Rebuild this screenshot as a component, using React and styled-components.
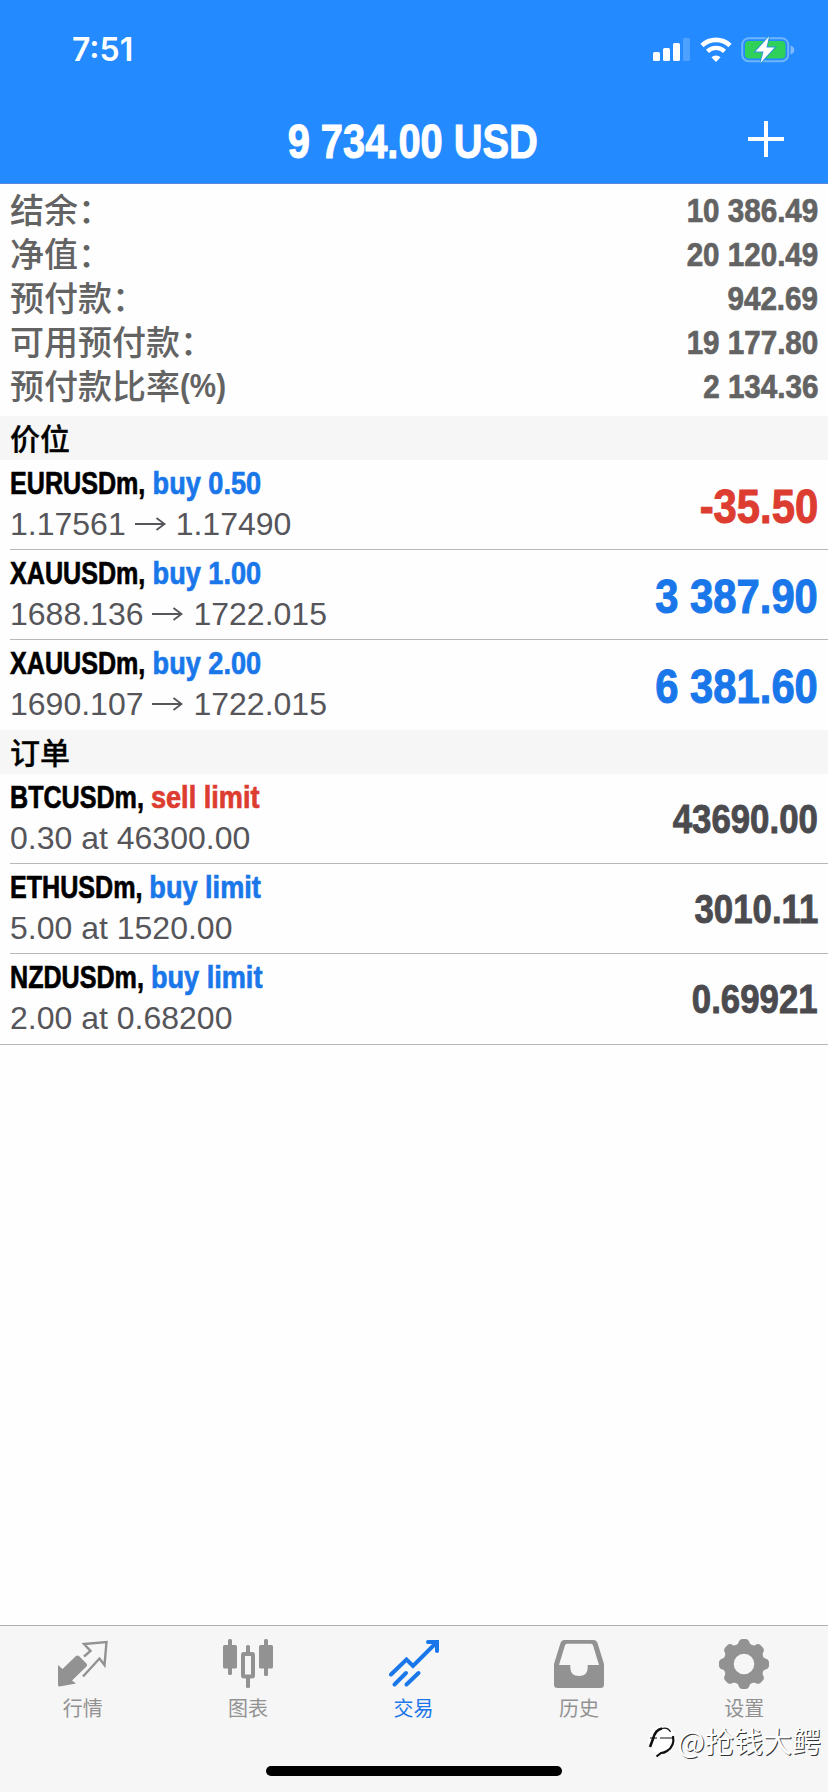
import React from "react";
import styled, { createGlobalStyle } from "styled-components";

const SANS = `"Liberation Sans", "Noto Sans CJK SC", sans-serif`;
const CJK = `"Noto Sans CJK SC", sans-serif`;

const BLUE = "#1a77ea";
const RED = "#dd3c30";

const GlobalStyle = createGlobalStyle`
  * {
    box-sizing: border-box;
  }

  body {
    margin: 0;
    background-color: #fdfdfd;
  }
`;

const Screen = styled.div`
  position: relative;
  display: flex;
  flex-direction: column;
  width: 828px;
  height: 1792px;
  overflow: hidden;
  background-color: #fefefe;
  font-family: ${SANS};
`;

// bold text squeezed to a condensed face
const Condensed = styled.div`
  font-weight: bold;
  white-space: nowrap;
  transform: scaleX(${({ $scale }) => $scale || 0.87});
  transform-origin: ${({ $origin }) => $origin || "right"};
  -webkit-text-stroke: 0.022em currentColor;
`;

const Header = styled.header`
  height: 184px;
  background-color: #248aff;
  border-bottom: 1px solid #5b87d8;
  color: white;
`;

const StatusBar = styled.div`
  display: flex;
  justify-content: space-between;
  align-items: center;
  height: 100px;
  padding: 0 33px 0 72px;
`;

const Clock = styled.div`
  font-family: Inter, sans-serif;
  font-size: 32px;
  font-weight: 600;
  line-height: 40px;
`;

const StatusIcons = styled.div`
  display: flex;
  align-items: center;

  svg + svg {
    margin-left: 9px;
  }
`;

const NavBar = styled.div`
  display: grid;
  grid-template-columns: 1fr auto 1fr;
  align-items: center;
  height: 83px;
  padding: 0 44px 0 42px;
`;

const NavTitle = styled(Condensed)`
  grid-column: 2;
  font-size: 48px;
  line-height: 60px;
`;

const AddIcon = styled.svg`
  justify-self: end;
  margin-bottom: 5px;
`;

const Summary = styled.div`
  height: 232px;
  padding: 4px 10px 8px;
`;

const SummaryRow = styled.div`
  display: flex;
  justify-content: space-between;
  height: 44px;
  line-height: 44px;
  color: #636363;
  font-size: 34px;
`;

const SummaryLabel = styled.div`
  display: flex;
  padding-top: 1px;
  font-weight: 500;
`;

const SummaryUnit = styled(Condensed)`
  line-height: 41px;
  -webkit-text-stroke: 0;
`;

const SectionTitle = styled.h2`
  height: 44px;
  margin: 0;
  padding-left: 10px;
  background-color: #f6f6f6;
  color: black;
  font-size: 30px;
  font-weight: 500;
  line-height: 47px;
  -webkit-text-stroke: 0.3px currentColor;
`;

const Row = styled.div`
  display: flex;
  justify-content: space-between;
  align-items: center;
  height: 90px;
  margin-left: 10px;
  padding-right: 10px;
  border-bottom: 1px solid ${({ $last }) => ($last ? "transparent" : "#b9b9bb")};
`;

const RowText = styled.div`
  margin-bottom: 2px;
`;

const Symbol = styled(Condensed)`
  color: black;
  font-size: 31px;
  line-height: 41px;
`;

const Side = styled.span`
  display: inline-block;
  color: ${({ $sell }) => ($sell ? RED : BLUE)};
  transform: scaleX(1.08);
  transform-origin: left;
  -webkit-text-stroke-color: currentColor;
`;

const Detail = styled.div`
  display: flex;
  align-items: center;
  color: #55555a;
  font-size: 32px;
  line-height: 41px;
  white-space: nowrap;
`;

const Arrow = styled.svg`
  margin: 0 10px 0 9px;
`;

const Profit = styled(Condensed)`
  padding-top: 3px;
  color: ${({ $loss }) => ($loss ? RED : BLUE)};
  font-size: 48px;
`;

const Price = styled(Condensed)`
  padding-top: 2px;
  color: #4b4b4f;
  font-size: 40px;
`;

const ListEnd = styled.div`
  border-top: 1px solid #b9b9bb;
`;

const TabBar = styled.nav`
  display: flex;
  height: 167px;
  margin-top: auto;
  padding: 13px 1px 0 0;
  background-color: #f6f6f6;
  border-top: 1px solid #aeb0b0;
`;

const Tab = styled.div`
  display: flex;
  flex: 1;
  flex-direction: column;
  align-items: center;
  color: ${({ $active }) => ($active ? BLUE : "#929292")};
  font-family: ${CJK};
  font-size: 20px;
  line-height: 28px;

  svg {
    margin-bottom: 5px;
  }
`;

const HomeIndicator = styled.div`
  position: absolute;
  bottom: 16px;
  left: 266px;
  width: 296px;
  height: 10px;
  border-radius: 5px;
  background-color: black;
`;

const Watermark = styled.div`
  position: absolute;
  right: 7px;
  bottom: 31px;
  display: flex;
  align-items: center;
  color: white;
  font-family: ${CJK};
  font-size: 29px;
  line-height: 42px;
  text-shadow: 1px 1px 0.5px #333;
`;

function SignalIcon() {
  return (
    <svg width="38" height="26" viewBox="0 0 38 26" fill="white">
      <rect x="0" y="15" width="7" height="9" rx="1.5" />
      <rect x="10" y="11" width="7" height="13" rx="1.5" />
      <rect x="20" y="6" width="7" height="18" rx="1.5" />
      <rect x="30" y="1" width="7" height="23" rx="1.5" opacity="0.2" />
    </svg>
  );
}

function WifiIcon() {
  return (
    <svg width="32" height="26" viewBox="0 0 32 26" fill="none" stroke="white">
      <path d="M2 8.5a20.2 20.2 0 0 1 28 0" strokeWidth="4.6" />
      <path d="M7.5 14.3a12.3 12.3 0 0 1 17 0" strokeWidth="4.4" />
      <path d="M16 25l-4.6-4.7a6.6 6.6 0 0 1 9.2 0z" fill="white" stroke="none" />
    </svg>
  );
}

function BatteryIcon() {
  return (
    <svg width="54" height="28" viewBox="0 0 54 28">
      <rect x="1.2" y="2.2" width="46" height="23" rx="6.5" fill="none" stroke="#6fb5fb" strokeWidth="2" />
      <path d="M49.5 9.5q3.8 1.2 3.8 4.5t-3.8 4.5z" fill="#7db9fb" />
      <rect x="4" y="5" width="40.5" height="17.5" rx="4" fill="#30d158" />
      <path
        d="M28 0.5L14.5 15.5h8L19.5 27 33.5 11.5h-8z"
        fill="white"
        stroke="#2a96d8"
        strokeWidth="2"
        paintOrder="stroke"
      />
    </svg>
  );
}

function QuotesIcon() {
  return (
    <svg width="50" height="50" viewBox="0 0 50 50">
      <path
        d="M0 26L4.5 30 18 17q1.500-1.200 3 0l7.500 7.500q1.200 1.500 0 3L14 41.500 18 44.500 1.500 47.500q-1.500 0-1.500-1.500z"
        fill="currentColor"
      />
      <path
        d="M26 17.500l6.500-5.500-6.500-7L48.500 3l-2 23-5-6.500-16.500 18"
        fill="none"
        stroke="currentColor"
        strokeWidth="2.4"
      />
    </svg>
  );
}

function ChartIcon() {
  return (
    <svg width="50" height="50" viewBox="0 0 50 50" fill="currentColor">
      <rect x="5" y="0" width="4" height="36" rx="1.5" />
      <rect x="0" y="6" width="14" height="23.5" rx="1.5" />
      <rect x="41" y="0" width="4" height="37" rx="1.5" />
      <rect x="36" y="6" width="14" height="23.5" rx="1.5" />
      <rect x="23" y="6" width="4" height="8" rx="1.5" />
      <rect x="23" y="37" width="4" height="12" rx="1.5" />
      <rect x="20" y="15" width="10" height="22.5" rx="1" fill="none" stroke="currentColor" strokeWidth="4" />
    </svg>
  );
}

function TradeIcon() {
  return (
    <svg
      width="50"
      height="50"
      viewBox="0 0 50 50"
      fill="none"
      stroke="currentColor"
      strokeWidth="4"
      strokeLinecap="round"
    >
      <path d="M2 35.5L17.5 20.5 24 27 47.5 3.5" />
      <path d="M39 3H48V12" />
      <path d="M5.5 45.5L17 34M17.5 45.5L29.5 34" />
    </svg>
  );
}

function HistoryIcon() {
  return (
    <svg width="50" height="50" viewBox="0 0 50 50">
      <path
        fillRule="evenodd"
        fill="currentColor"
        d="M10.5 1h29q3 0 4 3L50 25v20.5q0 3.500-3.500 3.500h-43Q0 49 0 45.500V25L6.500 4q1-3 4-3zM13 4.800q-1.500 0-2 1.500L5 26h11.300v2.500q0 8.500 8.700 8.500t8.700-8.500V26H45L39 6.300q-.5-1.500-2-1.500z"
      />
    </svg>
  );
}

function SettingsIcon() {
  return (
    <svg width="50" height="50" viewBox="0 0 50 50">
      <g fill="currentColor">
        {[0, 45, 90, 135, 180, 225, 270, 315].map((angle) => (
          <path
            key={angle}
            d="M15 8q3.500-1 4.500-4.500Q20.500 0 23.500 0h3q3 0 4 3.500Q31.500 7 35 8z"
            transform={`rotate(${angle} 25 25)`}
          />
        ))}
      </g>
      <circle cx="25" cy="25" r="15.5" fill="none" stroke="currentColor" strokeWidth="10.4" />
    </svg>
  );
}

function WatermarkLogo() {
  return (
    <svg width="31" height="36" viewBox="0 0 31 36" fill="none" stroke="#111" strokeWidth="1.8">
      <circle cx="15" cy="18" r="14" fill="white" stroke="none" />
      <path d="M3 25L6 17Q8 8 15 6.500" strokeWidth="2.600" />
      <path d="M15 6.500Q21 5 23.500 10" strokeWidth="1.200" />
      <path d="M26 14Q28 24 20 29Q17 31 14 31L9.500 34.500" strokeWidth="2.200" />
      <path d="M3 16H10M13 16H26" strokeWidth="1.200" />
    </svg>
  );
}

const summary = [
  { label: "结余：", value: "10 386.49" },
  { label: "净值：", value: "20 120.49" },
  { label: "预付款：", value: "942.69" },
  { label: "可用预付款：", value: "19 177.80" },
  { label: "预付款比率", unit: "(%)", value: "2 134.36" },
];

const positions = [
  { symbol: "EURUSDm", side: "buy 0.50", open: "1.17561", current: "1.17490", profit: "-35.50" },
  { symbol: "XAUUSDm", side: "buy 1.00", open: "1688.136", current: "1722.015", profit: "3 387.90" },
  { symbol: "XAUUSDm", side: "buy 2.00", open: "1690.107", current: "1722.015", profit: "6 381.60" },
];

const orders = [
  { symbol: "BTCUSDm", side: "sell limit", detail: "0.30 at 46300.00", price: "43690.00" },
  { symbol: "ETHUSDm", side: "buy limit", detail: "5.00 at 1520.00", price: "3010.11" },
  { symbol: "NZDUSDm", side: "buy limit", detail: "2.00 at 0.68200", price: "0.69921" },
];

const tabs = [
  { label: "行情", Icon: QuotesIcon },
  { label: "图表", Icon: ChartIcon },
  { label: "交易", Icon: TradeIcon, active: true },
  { label: "历史", Icon: HistoryIcon },
  { label: "设置", Icon: SettingsIcon },
];

function App() {
  return (
    <Screen>
      <GlobalStyle />
      <Header>
        <StatusBar>
          <Clock>7:51</Clock>
          <StatusIcons>
            <SignalIcon />
            <WifiIcon />
            <BatteryIcon />
          </StatusIcons>
        </StatusBar>
        <NavBar>
          <NavTitle $scale={0.83} $origin="center">
            9 734.00 USD
          </NavTitle>
          <AddIcon width="36" height="36" viewBox="0 0 36 36">
            <path d="M18 0v36M0 18h36" stroke="white" strokeWidth="4" />
          </AddIcon>
        </NavBar>
      </Header>
      <Summary>
        {summary.map(({ label, unit, value }) => (
          <SummaryRow key={label}>
            <SummaryLabel>
              {label}
              {unit && (
                <SummaryUnit $scale={0.87} $origin="left">
                  {unit}
                </SummaryUnit>
              )}
            </SummaryLabel>
            <Condensed>{value}</Condensed>
          </SummaryRow>
        ))}
      </Summary>
      <SectionTitle>价位</SectionTitle>
      {positions.map(({ symbol, side, open, current, profit }, i) => (
        <Row key={side} $last={i === positions.length - 1}>
          <RowText>
            <Symbol $scale={0.81} $origin="left">
              {symbol}, <Side>{side}</Side>
            </Symbol>
            <Detail>
              {open}
              <Arrow width="31" height="14" viewBox="0 0 31 14" fill="none" stroke="currentColor" strokeWidth="1.8">
                <path d="M0 7h29.5M21.500 1L29.500 7 21.500 13" />
              </Arrow>
              {current}
            </Detail>
          </RowText>
          <Profit $loss={profit.startsWith("-")}>{profit}</Profit>
        </Row>
      ))}
      <SectionTitle>订单</SectionTitle>
      {orders.map(({ symbol, side, detail, price }, i) => (
        <Row key={symbol} $last={i === orders.length - 1}>
          <RowText>
            <Symbol $scale={0.81} $origin="left">
              {symbol}, <Side $sell={side.startsWith("sell")}>{side}</Side>
            </Symbol>
            <Detail>{detail}</Detail>
          </RowText>
          <Price>{price}</Price>
        </Row>
      ))}
      <ListEnd />
      <TabBar>
        {tabs.map(({ label, Icon, active }) => (
          <Tab key={label} $active={active}>
            <Icon />
            {label}
          </Tab>
        ))}
      </TabBar>
      <HomeIndicator />
      <Watermark>
        <WatermarkLogo />
        @抢钱大鳄
      </Watermark>
    </Screen>
  );
}

export default App;
